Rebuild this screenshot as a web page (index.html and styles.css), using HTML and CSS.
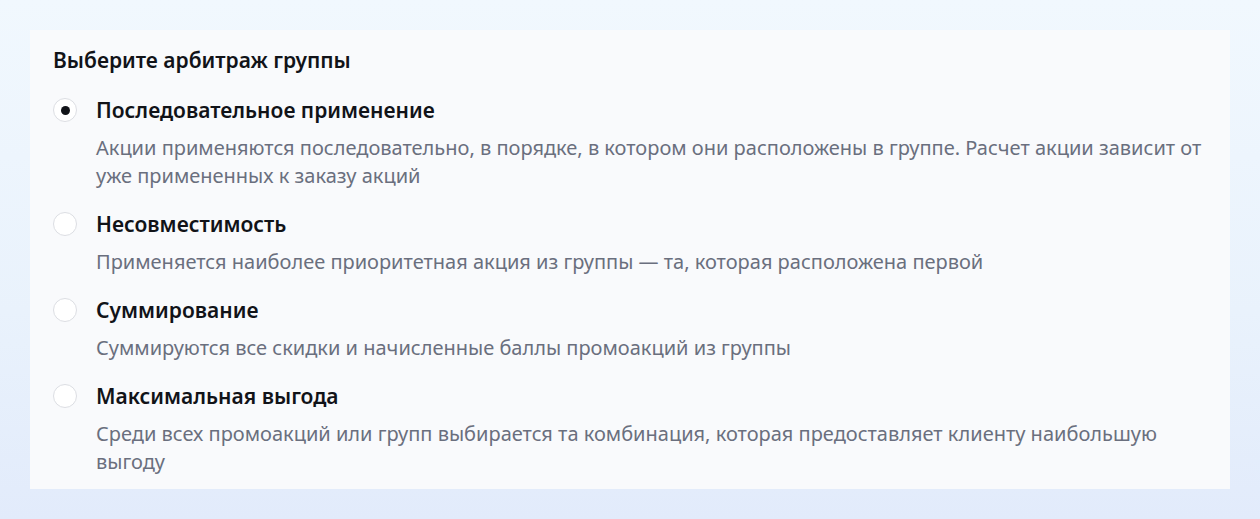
FILE: index.html
```html
<!DOCTYPE html>
<html lang="ru">
<head>
<meta charset="utf-8">
<title>Арбитраж группы</title>
<link rel="stylesheet" href="styles.css">
</head>
<body>
<main class="page">
  <section class="card">
    <h2 class="card-title">Выберите арбитраж группы</h2>
    <div class="options" role="radiogroup">
      <label class="option">
        <span class="radio is-checked"></span>
        <span class="option-body">
          <span class="option-name">Последовательное применение</span>
          <span class="option-desc">Акции применяются последовательно, в порядке, в котором они расположены в группе. Расчет акции зависит от уже примененных к заказу акций</span>
        </span>
      </label>
      <label class="option">
        <span class="radio"></span>
        <span class="option-body">
          <span class="option-name">Несовместимость</span>
          <span class="option-desc">Применяется наиболее приоритетная акция из группы — та, которая расположена первой</span>
        </span>
      </label>
      <label class="option">
        <span class="radio"></span>
        <span class="option-body">
          <span class="option-name">Суммирование</span>
          <span class="option-desc">Суммируются все скидки и начисленные баллы промоакций из группы</span>
        </span>
      </label>
      <label class="option">
        <span class="radio"></span>
        <span class="option-body">
          <span class="option-name">Максимальная выгода</span>
          <span class="option-desc">Среди всех промоакций или групп выбирается та комбинация, которая предоставляет клиенту наибольшую выгоду</span>
        </span>
      </label>
    </div>
  </section>
</main>
</body>
</html>
```

FILE: styles.css
```css
html, body {
  margin: 0;
  height: 100%;
}

body {
  font-family: "Noto Sans", "Open Sans", sans-serif;
  background: linear-gradient(180deg, #f1f8fe 0%, #e9f2fc 60%, #e2ebfb 100%);
}

.page {
  padding: 30px;
}

.card {
  background: #f9fafc;
  padding: 16px 23px 13px 23px;
}

.card-title {
  margin: 0 0 21px;
  font-size: 21px;
  font-weight: 600;
  line-height: 28px;
  color: #111318;
}

.options {
  display: flex;
  flex-direction: column;
  gap: 19px;
}

.option {
  display: flex;
  gap: 19px;
  align-items: flex-start;
}

.radio {
  flex: none;
  box-sizing: border-box;
  width: 24px;
  height: 24px;
  margin-top: 3px;
  border: 1px solid #dcdee3;
  border-radius: 50%;
  background: #ffffff;
  display: flex;
  align-items: center;
  justify-content: center;
}

.radio.is-checked::after {
  content: "";
  width: 9px;
  height: 9px;
  border-radius: 50%;
  background: #111318;
}

.option-body {
  display: flex;
  flex-direction: column;
  gap: 9px;
}

.option-name {
  font-size: 21px;
  font-weight: 600;
  line-height: 30px;
  color: #111318;
}

.option-desc {
  font-size: 20px;
  line-height: 28px;
  color: #6a6f7e;
}
```
